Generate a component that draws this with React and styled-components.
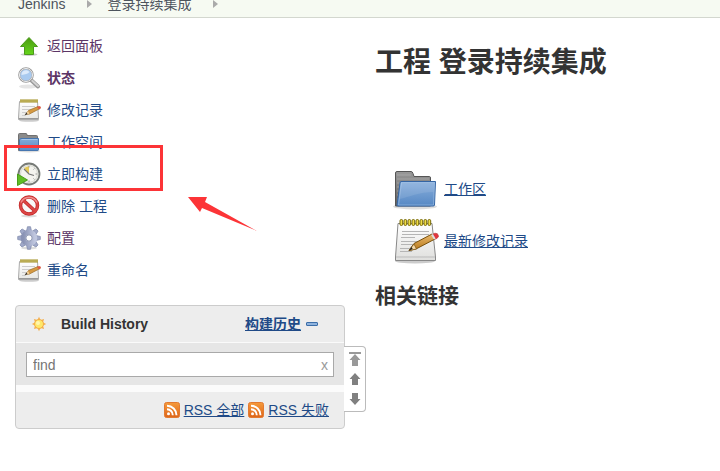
import React, { useState } from "react";
import styled, { createGlobalStyle } from "styled-components";

const GlobalStyle = createGlobalStyle`
  * { box-sizing: border-box; }
  body {
    margin: 0;
    background: #fff;
    color: #333;
    font: 14px/20px "Liberation Sans", "Noto Sans CJK SC", sans-serif;
  }
`;

const Page = styled.div`
  position: relative;
  overflow: hidden;
`;

const BreadcrumbBar = styled.nav`
  display: flex;
  align-items: flex-end;
  height: 18px;
  padding-left: 18px;
  overflow: hidden;
  background: #f6faf2;
  border-bottom: 1px solid #d3d7cf;
`;

const Crumb = styled.a`
  line-height: 26px;
  color: #4d545d;
  text-decoration: none;
`;

const CrumbArrow = styled.svg`
  width: 5px;
  height: 8px;
  margin: 0 ${(p) => (p.$last ? 0 : 15)}px 9px 22px;
  fill: #aaa;
`;

const Columns = styled.div`
  display: flex;
  align-items: flex-start;
`;

const Sidebar = styled.aside`
  flex: 0 0 345px;
  padding: 12px 0 0 15px;
`;

const TaskList = styled.ul`
  list-style: none;
  margin: 0 0 19px;
  padding: 0;
`;

const Task = styled.li`
  display: flex;
  align-items: center;
  gap: 6px;
  height: 32px;
  padding-left: 2px;
`;

const TaskLink = styled.a`
  color: ${(p) => (p.$visited ? "#5c3566" : "#204a87")};
  font-weight: ${(p) => (p.$current ? 700 : 400)};
  text-decoration: none;
`;

const Icon = styled.svg`
  flex: none;
  display: block;
  width: ${(p) => p.$size || 24}px;
  height: ${(p) => p.$size || 24}px;
`;

const HistoryPanel = styled.section`
  position: relative;
  border: 1px solid #ccc;
  border-radius: 4px;
  background: #ededed;
`;

const HistoryHeader = styled.header`
  display: flex;
  align-items: center;
  height: 37px;
  padding: 0 26px 0 15px;
  border-bottom: 1px solid #fafafa;
`;

const HistoryTitle = styled.span`
  flex: 1;
  margin-left: 14px;
  font-weight: 700;
`;

const TrendLink = styled.a`
  display: flex;
  align-items: center;
  gap: 5px;
  color: #204a87;
  font-weight: 700;
`;

const CollapseMark = styled.span`
  width: 12px;
  height: 4px;
  background: #8fb3dd;
  border: 1px solid #3b6ea8;
  border-radius: 1px;
`;

const FilterRow = styled.form`
  padding: 9px 10px 8px;
  background: #e6e6e6;
  border-bottom: 7px solid #fbfbfb;
`;

const FilterBox = styled.div`
  display: flex;
  align-items: center;
  height: 25px;
  background: #fff;
  border: 1px solid #a9a9a9;
`;

const FilterInput = styled.input`
  flex: 1;
  min-width: 0;
  padding: 0 6px;
  border: 0;
  outline: 0;
  background: none;
  color: #333;
  font: inherit;
  &::placeholder { color: #757575; opacity: 1; }
`;

const ClearButton = styled.button`
  padding: 0 5px;
  border: 0;
  background: none;
  color: #999;
  font: inherit;
`;

const FeedRow = styled.footer`
  display: flex;
  justify-content: flex-end;
  align-items: center;
  gap: 4px;
  height: 36px;
  padding-right: 15px;
`;

const TextLink = styled.a`
  color: #204a87;
`;

const Pager = styled.div`
  position: absolute;
  top: 40px;
  left: 100%;
  display: flex;
  flex-direction: column;
  align-items: center;
  justify-content: space-between;
  width: 22px;
  height: 66px;
  padding: 4px 0;
  background: #fff;
  border: 1px solid #bbb;
  border-left: 0;
  border-radius: 0 4px 4px 0;
`;

const PagerButton = styled.button`
  padding: 0;
  border: 0;
  background: none;
`;

const Main = styled.main`
  flex: 1;
  min-width: 0;
  padding: 26px 30px 0;
`;

const Title = styled.h1`
  margin: 0 0 81px;
  font-size: 28px;
  line-height: 38px;
`;

const Shortcut = styled.div`
  display: flex;
  align-items: center;
  gap: 5px;
  height: 52px;
  padding-left: 16px;
`;

const Subtitle = styled.h2`
  margin: 15px 0 0;
  font-size: 21px;
  line-height: 28px;
`;

const Highlight = styled.div`
  position: absolute;
  top: 145px;
  left: 4px;
  width: 159px;
  height: 46px;
  border: 3px solid #fc3437;
  pointer-events: none;
`;

const Pointer = styled.svg`
  position: absolute;
  top: 197px;
  left: 188px;
  width: 70px;
  height: 36px;
  fill: #fc3437;
  pointer-events: none;
`;

const Gradient = ({ id, from, to, flat }) => (
  <linearGradient id={id} x1="0" y1="0" x2={flat ? 1 : 0} y2={flat ? 0 : 1}>
    <stop stopColor={from} />
    <stop offset="1" stopColor={to} />
  </linearGradient>
);

const UpIcon = () => (
  <Icon viewBox="0 0 24 24" aria-hidden="true">
    <defs><Gradient id="up" from="#4a9a10" to="#66d51c" /></defs>
    <ellipse cx="12" cy="20.500" rx="8.500" ry="1.500" fill="#ccc" />
    <path d="M12 3.500 20.500 12.500H16.500V20.500H7.500V12.500H3.500Z" fill="url(#up)" stroke="#4b9a1b" />
  </Icon>
);

const SearchIcon = () => (
  <Icon viewBox="0 0 24 24" aria-hidden="true">
    <ellipse cx="11" cy="20.5" rx="9" ry="2" fill="#e5e5e5" />
    <path d="m14.5 14.5 6.5 6" stroke="#999" strokeWidth="4" strokeLinecap="round" />
    <path d="m15 14.5 6 5.5" stroke="#d2d2d2" strokeWidth="2" strokeLinecap="round" />
    <circle cx="9" cy="9" r="6.8" fill="#a9caef" stroke="#999" strokeWidth="2" />
    <circle cx="9" cy="9" r="6.5" fill="none" stroke="#eee" />
    <path d="M4.5 9a4.5 4.5 0 0 1 8-3C11 8 8 8.500 4.500 9Z" fill="#dceafa" />
  </Icon>
);

const NotepadIcon = () => (
  <Icon viewBox="0 0 24 24" aria-hidden="true">
    <defs><Gradient id="sheet" from="#fff" to="#e6e6e3" /></defs>
    <ellipse cx="12" cy="22.500" rx="10" ry="1.300" fill="#ccc" />
    <path d="M2.500 3.500H20.500L21.500 20V21.500H1.500V20Z" fill="url(#sheet)" stroke="#aaa" />
    <path d="M2 20.500H21" stroke="#999" />
    <path d="M3 3H21" stroke="#8f812d" strokeWidth="3" />
    <path d="M3.500 3H21" stroke="#e5d77a" strokeWidth="3" strokeDasharray="1 1" />
    <path d="M5 8.500H18M5 11.500H16M5 14.500H10M5 17.500H9" stroke="#ccc" />
    <path d="m8.500 16.500 3-4L21 8.500l2 2L12.500 16Z" fill="#d69a42" stroke="#9b6b27" strokeWidth=".7" />
    <path d="m8 17 3-4 1.500 2.800Z" fill="#f0d09b" />
    <path d="m7.500 17.300 2-2.800 1 1.700Z" fill="#333" />
    <path d="m20 9 2-1q2 0 2 2l-2 1.500Z" fill="#dc5a43" />
  </Icon>
);

const LargeNotepadIcon = () => (
  <Icon viewBox="0 0 48 48" $size={48} aria-hidden="true">
    <defs>
      <Gradient id="paper" from="#fff" to="#dfdfdd" />
      <Gradient id="pencil" from="#e9b96e" to="#b87818" />
    </defs>
    <ellipse cx="24" cy="44" rx="20" ry="2.500" fill="#ccc" />
    <path d="M7 6.500H41L44.500 40V43.500H4.500V40Z" fill="url(#paper)" stroke="#888" />
    <path d="M5 40H44" stroke="#bbb" />
    <path d="M11 14.500H38M11 17.500H38M10 20.500H24M10 24.500H35M10 27.500H27M9 31.500H25M9 34.500H21" stroke="#b5b5b5" />
    {[10, 14, 18, 22, 26, 30, 34, 38].map((x) => (
      <rect key={x} x={x - 1} y="2.500" width="2.700" height="6" rx="1.300" fill="#eedb45" stroke="#766808" strokeWidth="1" />
    ))}
    <path d="m18 33.500 5-7L41 17l3 5-19 10Z" fill="url(#pencil)" stroke="#77500d" />
    <path d="m18 33.500 5-6.500 2.500 5Z" fill="#f4d9aa" stroke="#77500d" strokeWidth=".7" />
    <path d="m18 33.500 2.500-3.500 1.200 2Z" fill="#222" />
    <path d="m42 17 2-.8q3-.5 3.500 3-.5 2-3 3Z" fill="#e3343c" stroke="#c14444" strokeWidth=".7" />
    <path d="m41 17.500 2.800 4.500" stroke="#ddd" strokeWidth="2" />
  </Icon>
);

const FolderIcon = () => (
  <Icon viewBox="0 0 24 24" aria-hidden="true">
    <defs><Gradient id="smallFront" from="#82abd9" to="#5b8cc6" /></defs>
    <ellipse cx="12" cy="21" rx="11" ry="1.500" fill="#ddd" />
    <path d="M1.500 20.500V4.500q0-1 1-1H9q1 0 1 1.500v.5H19.500q1 0 1 1V20.500Z" fill="#8b8b8b" stroke="#707070" />
    <path d="M3.500 8.500H21.500V19.500q0 1-1 1H2.500V10Z" fill="url(#smallFront)" stroke="#4676b0" />
    <path d="M4.500 9.500H20.500" stroke="#a5c5e8" />
  </Icon>
);

const LargeFolderIcon = () => (
  <Icon viewBox="0 0 48 48" $size={48} aria-hidden="true">
    <defs>
      <Gradient id="back" from="#999" to="#606060" />
      <Gradient id="front" from="#89afdc" to="#5688c4" />
    </defs>
    <ellipse cx="24" cy="41.500" rx="22" ry="3" fill="#ddd" />
    <path d="M4.500 41V8q0-1.500 1.500-1.500H20q1.500 0 2 2l1 3H38.500q1 0 1 1.500V41Z" fill="url(#back)" stroke="#555" />
    <path d="M6 10H20M6 14H38M6 18H9M6 22H9M6 26H8M6 30H8M6 34H7" stroke="#bbb" strokeOpacity=".5" />
    <path d="M10 16.500H44.500L43.500 40q0 1-1.500 1H7q-1 0-1-1L9 18q0-1.500 1-1.500Z" fill="url(#front)" stroke="#3465a4" />
    <path d="M10.500 17.500H43.500L42.500 40H7.500Z" fill="none" stroke="#b4cfec" strokeOpacity=".45" />
    <path d="M10 18H43L42.500 27C28 27 18 32 8.500 34Z" fill="#fff" fillOpacity=".1" />
  </Icon>
);

const ClockIcon = () => (
  <Icon viewBox="0 0 24 24" aria-hidden="true">
    <circle cx="12" cy="12" r="10.500" fill="#f4f4ef" stroke="#777b77" strokeWidth="1.800" />
    <circle cx="12" cy="12" r="8.500" fill="none" stroke="#d5d7d0" />
    <path d="m12 12-5-6 5-2Z" fill="#e5c956" />
    <path d="m7 7 5 5 5 1.500" fill="none" stroke="#777" strokeWidth="1.200" />
    <path d="M12 4v1.500M20 12h-1.500M12 20v-1.500M17.500 6.500l-1 1M17.500 17.500l-1-1" stroke="#999" />
    <path d="M.5 12 10.500 18 .5 23.500Z" fill="#5fbd25" stroke="#4a9c1b" />
  </Icon>
);

const DeleteIcon = () => (
  <Icon viewBox="0 0 24 24" aria-hidden="true">
    <ellipse cx="12" cy="22" rx="8" ry="1.500" fill="#ddd" />
    <circle cx="12" cy="11.500" r="8.500" fill="#f8f8f8" stroke="#c22b2b" strokeWidth="3.500" />
    <path d="m6 6 12 11" stroke="#c22b2b" strokeWidth="3.500" />
    <circle cx="12" cy="11.500" r="8.500" fill="none" stroke="#dd4646" strokeWidth="2" />
    <path d="m6 6 12 11" stroke="#dd4646" strokeWidth="2" />
    <path d="M4 8.500a9 9 0 0 1 16 0" fill="none" stroke="#ef8e8e" strokeWidth="1.500" />
  </Icon>
);

const GearIcon = () => (
  <Icon viewBox="0 0 24 24" aria-hidden="true">
    <defs><Gradient id="gear" from="#8992b4" to="#c0c7df" flat /></defs>
    <ellipse cx="12" cy="22" rx="8" ry="1.500" fill="#ddd" />
    <g fill="#a0a9c9" stroke="#7e88aa" strokeWidth=".7">
      {[0, 45, 90, 135, 180, 225, 270, 315].map((a) => (
        <path key={a} d="M9.500 5 10.500.7h3L14.500 5Z" transform={`rotate(${a} 12 12)`} />
      ))}
    </g>
    <circle cx="12" cy="12" r="5.800" fill="none" stroke="url(#gear)" strokeWidth="5" />
    <circle cx="12" cy="12" r="3.200" fill="#fff" stroke="#838dac" />
  </Icon>
);

const SunIcon = () => (
  <Icon viewBox="0 0 16 16" $size={16} aria-hidden="true">
    <g fill="#f4ad48">
      {[0, 45, 90, 135, 180, 225, 270, 315].map((a) => (
        <path key={a} d="M6.500 4 8 .8 9.500 4Z" transform={`rotate(${a} 8 8)`} />
      ))}
    </g>
    <circle cx="8" cy="8" r="4.500" fill="#ffe86a" stroke="#f4ad48" />
    <circle cx="7" cy="7" r="2" fill="#fff7ae" />
  </Icon>
);

const FeedIcon = () => (
  <Icon viewBox="0 0 16 16" $size={16} aria-hidden="true">
    <defs><Gradient id="feed" from="#f59a3b" to="#dd6519" /></defs>
    <rect x=".5" y=".5" width="15" height="15" rx="2" fill="url(#feed)" stroke="#e37a30" />
    <circle cx="4.500" cy="11.700" r="1.500" fill="#fff" />
    <path d="M3 7.200a6 6 0 0 1 5.800 6M3 3.700a9.500 9.500 0 0 1 9.500 9.500" fill="none" stroke="#fff" strokeWidth="1.900" />
  </Icon>
);

const pagerShapes = {
  top: { label: "Newest builds", fill: "#999", d: "M2 1H14V3H2ZM8 3 13.500 9H11V15H5V9H2.500Z" },
  up: { label: "Newer builds", fill: "#808080", d: "M8 2 13.500 8H11V14H5V8H2.500Z" },
  down: { label: "Older builds", fill: "#808080", d: "M8 14 2.500 8H5V2H11V8H13.500Z" },
};

const tasks = [
  { label: "返回面板", icon: UpIcon, visited: true },
  { label: "状态", icon: SearchIcon, visited: true, current: true },
  { label: "修改记录", icon: NotepadIcon },
  { label: "工作空间", icon: FolderIcon },
  { label: "立即构建", icon: ClockIcon },
  { label: "删除 工程", icon: DeleteIcon },
  { label: "配置", icon: GearIcon, visited: true },
  { label: "重命名", icon: NotepadIcon },
];

function BuildHistory() {
  const [query, setQuery] = useState("");
  return (
    <HistoryPanel>
      <HistoryHeader>
        <SunIcon />
        <HistoryTitle>Build History</HistoryTitle>
        <TrendLink href="#trend">构建历史<CollapseMark /></TrendLink>
      </HistoryHeader>
      <FilterRow onSubmit={(e) => e.preventDefault()}>
        <FilterBox>
          <FilterInput
            aria-label="find"
            placeholder="find"
            value={query}
            onChange={(e) => setQuery(e.target.value)}
          />
          <ClearButton type="button" onClick={() => setQuery("")}>x</ClearButton>
        </FilterBox>
      </FilterRow>
      <FeedRow>
        <FeedIcon />
        <TextLink href="#rssAll">RSS 全部</TextLink>
        <FeedIcon />
        <TextLink href="#rssFailed">RSS 失败</TextLink>
      </FeedRow>
      <Pager>
        {Object.entries(pagerShapes).map(([key, shape]) => (
          <PagerButton key={key} type="button" aria-label={shape.label}>
            <Icon viewBox="0 0 16 16" $size={16}><path fill={shape.fill} d={shape.d} /></Icon>
          </PagerButton>
        ))}
      </Pager>
    </HistoryPanel>
  );
}

export default function App() {
  return (
    <Page>
      <GlobalStyle />
      <BreadcrumbBar>
        <Crumb href="#home">Jenkins</Crumb>
        <CrumbArrow viewBox="0 0 5 8"><path d="M0 0 5 4 0 8Z" /></CrumbArrow>
        <Crumb href="#project">登录持续集成</Crumb>
        <CrumbArrow viewBox="0 0 5 8" $last><path d="M0 0 5 4 0 8Z" /></CrumbArrow>
      </BreadcrumbBar>
      <Columns>
        <Sidebar>
          <TaskList>
            {tasks.map(({ label, icon: TaskIcon, visited, current }) => (
              <Task key={label}>
                <TaskIcon />
                <TaskLink href="#task" $visited={visited} $current={current}>{label}</TaskLink>
              </Task>
            ))}
          </TaskList>
          <BuildHistory />
        </Sidebar>
        <Main>
          <Title>工程 登录持续集成</Title>
          <Shortcut>
            <LargeFolderIcon />
            <TextLink href="#workspace">工作区</TextLink>
          </Shortcut>
          <Shortcut>
            <LargeNotepadIcon />
            <TextLink href="#changes">最新修改记录</TextLink>
          </Shortcut>
          <Subtitle>相关链接</Subtitle>
        </Main>
      </Columns>
      <Highlight />
      <Pointer viewBox="0 0 70 36" aria-hidden="true">
        <path d="M0 0H19L17 5 69 34 14 11 12 15Z" />
      </Pointer>
    </Page>
  );
}
